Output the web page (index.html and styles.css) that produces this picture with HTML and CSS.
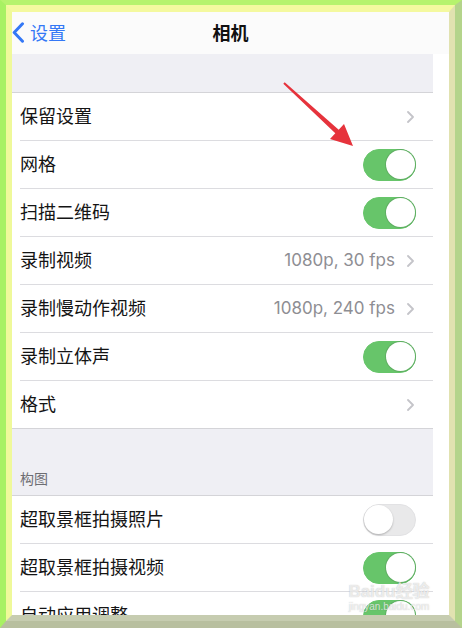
FILE: index.html
```html
<!DOCTYPE html>
<html lang="zh-CN">
<head>
    <meta charset="UTF-8">
    <meta name="viewport" content="width=device-width, initial-scale=1.0">
    <title>相机</title>
    <link rel="stylesheet" href="styles.css">
</head>
<body>
    <div class="frame">
        <div class="frame-inner">
            <div class="screen">
                <header class="nav">
                    <a class="back" href="#">
                        <svg class="back-icon" width="13" height="21" viewBox="0 0 13 21">
                            <path d="M10.5 1.8 L2.2 10.5 L10.5 19.2" fill="none" stroke="#3478f6" stroke-width="3" stroke-linecap="round" stroke-linejoin="round"/>
                        </svg>
                        <span>设置</span>
                    </a>
                    <h1 class="nav-title">相机</h1>
                </header>

                <div class="list">
                    <div class="group-gap"></div>
                    <ul class="group">
                        <li class="row"><div class="row-body"><span class="label">保留设置</span><span class="chev"></span></div></li>
                        <li class="row"><div class="row-body"><span class="label">网格</span><span class="switch on"></span></div></li>
                        <li class="row"><div class="row-body"><span class="label">扫描二维码</span><span class="switch on"></span></div></li>
                        <li class="row"><div class="row-body"><span class="label">录制视频</span><span class="value">1080p, 30 fps</span><span class="chev"></span></div></li>
                        <li class="row"><div class="row-body"><span class="label">录制慢动作视频</span><span class="value">1080p, 240 fps</span><span class="chev"></span></div></li>
                        <li class="row"><div class="row-body"><span class="label">录制立体声</span><span class="switch on"></span></div></li>
                        <li class="row"><div class="row-body"><span class="label">格式</span><span class="chev"></span></div></li>
                    </ul>

                    <div class="group-header">构图</div>
                    <ul class="group">
                        <li class="row"><div class="row-body"><span class="label">超取景框拍摄照片</span><span class="switch"></span></div></li>
                        <li class="row"><div class="row-body"><span class="label">超取景框拍摄视频</span><span class="switch on"></span></div></li>
                        <li class="row"><div class="row-body"><span class="label">自动应用调整</span><span class="switch on"></span></div></li>
                    </ul>
                </div>
            </div>
        </div>
    </div>

    <!-- flèche rouge ajoutée sur la capture -->
    <svg class="arrow" width="462" height="628" viewBox="0 0 462 628">
        <polygon points="284.7,82.3 338.7,129.7 344,124 353,146 330,139 335.3,133.3 283.3,83.7" fill="#e6333c"/>
    </svg>

    <div class="watermark">
        <span class="wm-logo">Bai<span class="wm-du">du</span>经验</span>
        <span class="wm-url">jingyan.baidu.com</span>
    </div>
</body>
</html>
```

FILE: styles.css
```css
/* Global Styles */
body {
    margin: 0;
    padding: 0;
    font-family: Inter, "Noto Sans CJK SC", sans-serif;
    background-color: #ffffff;
}

/* cadre vert autour de la capture */
.frame {
    width: 462px;
    height: 628px;
    box-sizing: border-box;
    border-style: solid;
    border-width: 5px 7px 7px 6px;
    border-color: #b6f36d #b4d48b #b8bf9f #a8f163;
    overflow: hidden;
}

.frame-inner {
    height: 100%;
    box-sizing: border-box;
    border-style: solid;
    border-width: 7px 6px 6px 6px;
    border-color: #f4f99f #e1e2b0 #c6ccb0 #eff99a;
    background-color: #ffffff;
    overflow: hidden;
}

.screen {
    height: 100%;
    overflow: hidden;
}

/* Barre de navigation */
.nav {
    position: relative;
    height: 42px;
    box-sizing: border-box;
    padding-bottom: 3px;
    display: flex;
    align-items: center;
    justify-content: center;
    background-color: #fbfbfb;
}

.back {
    position: absolute;
    left: 0;
    top: 0;
    height: 40px;
    display: flex;
    align-items: center;
    gap: 5px;
    color: #3478f6;
    text-decoration: none;
    font-size: 18px;
}

.back-icon {
    display: block;
}

.nav-title {
    margin: 0;
    font-size: 18px;
    font-weight: 600;
    color: #111111;
}

/* Liste */
.list {
    width: 421px;
    background-color: #efeff4;
}

.group-gap {
    height: 38px;
}

.group {
    list-style-type: none;
    margin: 0;
    padding: 0;
    background-color: #ffffff;
    border-top: 1px solid #d4d4d8;
    border-bottom: 1px solid #d4d4d8;
}

.row {
    padding-left: 8px;
}

.row-body {
    height: 48px;
    box-sizing: border-box;
    display: flex;
    align-items: center;
    padding-right: 17px;
    border-bottom: 1px solid #dcdce0;
}

.row:last-child .row-body {
    border-bottom: none;
    height: 47px;
}

.label {
    flex: 1;
    font-size: 18px;
    color: #141414;
    margin-top: -3px;
}

.value {
    font-size: 17px;
    color: #8e8e93;
    margin-right: 12px;
    margin-top: -2px;
}

.chev {
    width: 7px;
    height: 12px;
    margin-right: 2px;
    background-image: url("data:image/svg+xml,%3Csvg xmlns='http://www.w3.org/2000/svg' width='7' height='12' viewBox='0 0 7 12'%3E%3Cpath d='M1 1 L6 6 L1 11' fill='none' stroke='%23c4c4c9' stroke-width='1.8' stroke-linecap='round' stroke-linejoin='round'/%3E%3C/svg%3E");
}

.group-header {
    height: 66px;
    box-sizing: border-box;
    display: flex;
    align-items: flex-end;
    padding: 0 0 7px 8px;
    font-size: 14px;
    color: #6d6d72;
}

/* Interrupteurs */
.switch {
    position: relative;
    width: 53px;
    height: 32px;
    box-sizing: border-box;
    border-radius: 16px;
    background-color: #e9e9ea;
    border: 1.5px solid #e2e2e4;
}

.switch::after {
    content: "";
    position: absolute;
    top: 0;
    left: 0;
    width: 29px;
    height: 29px;
    border-radius: 50%;
    background-color: #ffffff;
    box-shadow: 0 1px 2px rgba(0, 0, 0, 0.25);
}

.switch.on {
    background-color: #67c56a;
    border-color: #67c56a;
}

.switch.on::after {
    left: auto;
    right: 0;
    box-shadow: 0 0 0 1px #5fae62;
}

/* Calques par-dessus la capture */
.arrow {
    position: absolute;
    left: 0;
    top: 0;
    pointer-events: none;
}

.watermark {
    position: absolute;
    left: 343px;
    top: 583px;
    width: 92px;
    display: flex;
    flex-direction: column;
    align-items: center;
    color: rgba(255, 255, 255, 0.7);
    text-shadow: 0 0 1px rgba(120, 120, 120, 0.5);
    line-height: 1;
}

.wm-logo {
    font-family: "Liberation Sans", "Noto Sans CJK SC", sans-serif;
    font-size: 17px;
    font-weight: bold;
}

.wm-url {
    font-family: "Liberation Sans", sans-serif;
    font-size: 10px;
    margin-top: 2px;
}
```
